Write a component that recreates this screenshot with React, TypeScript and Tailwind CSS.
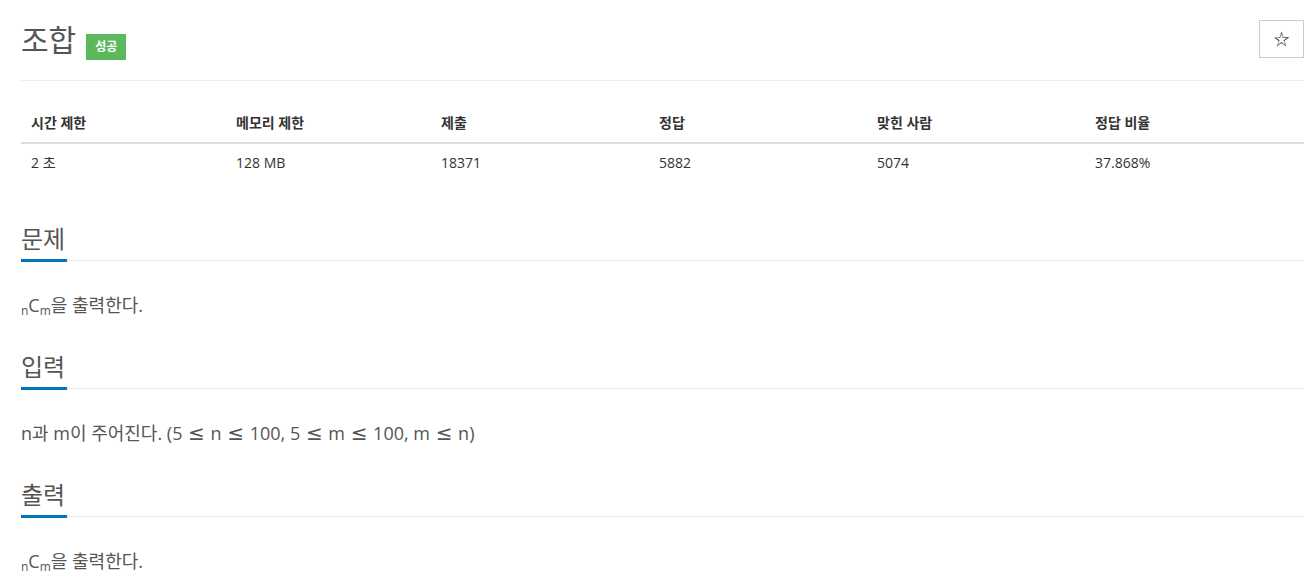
import React from "react";

const font = { fontFamily: '"Open Sans", "Noto Sans CJK KR", sans-serif' };

const stats = [
  { label: "시간 제한", value: "2 초" },
  { label: "메모리 제한", value: "128 MB" },
  { label: "제출", value: "18371" },
  { label: "정답", value: "5882" },
  { label: "맞힌 사람", value: "5074" },
  { label: "정답 비율", value: "37.868%" },
];

const NCm = () => (
  <>
    <sub className="text-[12px]">n</sub>C<sub className="text-[12px]">m</sub>
  </>
);

// math glyph, wider than the Open Sans one
const Le = () => (
  <span className="mx-[1px] text-[20px] leading-none" style={{ fontFamily: '"DejaVu Sans", sans-serif' }}>
    ≤
  </span>
);

const Section = ({
  title,
  first,
  children,
}: {
  title: string;
  first?: boolean;
  children: React.ReactNode;
}) => (
  <section className={first ? "mt-[42px]" : "mt-[33px]"}>
    <div className="border-b border-dotted border-[#ddd]">
      <h2 className="inline-block text-[24px] leading-[30px] pb-[5px] pr-[2px] border-b-[3px] border-[#0076c0] -mb-[2px] text-[#555] font-normal">
        {title}
      </h2>
    </div>
    <p className="mt-[30px] text-[18px] leading-[28px] text-[#555]">{children}</p>
  </section>
);

export default function App() {
  return (
    <div className="min-h-screen bg-white pl-[21px] pr-[10px] pt-[20px]" style={font}>
      <div className="h-[61px] flex justify-between items-start border-b border-[#eee]">
        <div className="flex items-start gap-[10px]">
          <h1 className="text-[30px] leading-[40px] text-[#555] font-normal">조합</h1>
          <span className="mt-[14px] h-[26px] px-[9px] flex items-center bg-[#5cb85c] text-white text-[12px] font-bold">
            성공
          </span>
        </div>
        <button className="w-[45px] h-[38px] border border-[#ccc] flex items-center justify-center text-[#333] text-[16px] bg-white">
          ☆
        </button>
      </div>

      <div className="mt-[23px] grid grid-cols-[205px_205px_218px_218px_218px_1fr] text-[14px] leading-[20px] text-[#333]">
        {stats.map((s) => (
          <div key={s.label} className="px-[10px] py-[9px] font-bold border-b-2 border-[#ddd]">
            {s.label}
          </div>
        ))}
        {stats.map((s) => (
          <div key={s.label + "v"} className="px-[10px] py-[9px]">
            {s.value}
          </div>
        ))}
      </div>

      <Section title="문제" first>
        <NCm />을 출력한다.
      </Section>
      <Section title="입력">
        n과 m이 주어진다. (5 <Le /> n <Le /> 100, 5 <Le /> m <Le /> 100, m <Le /> n)
      </Section>
      <Section title="출력">
        <NCm />을 출력한다.
      </Section>
    </div>
  );
}
